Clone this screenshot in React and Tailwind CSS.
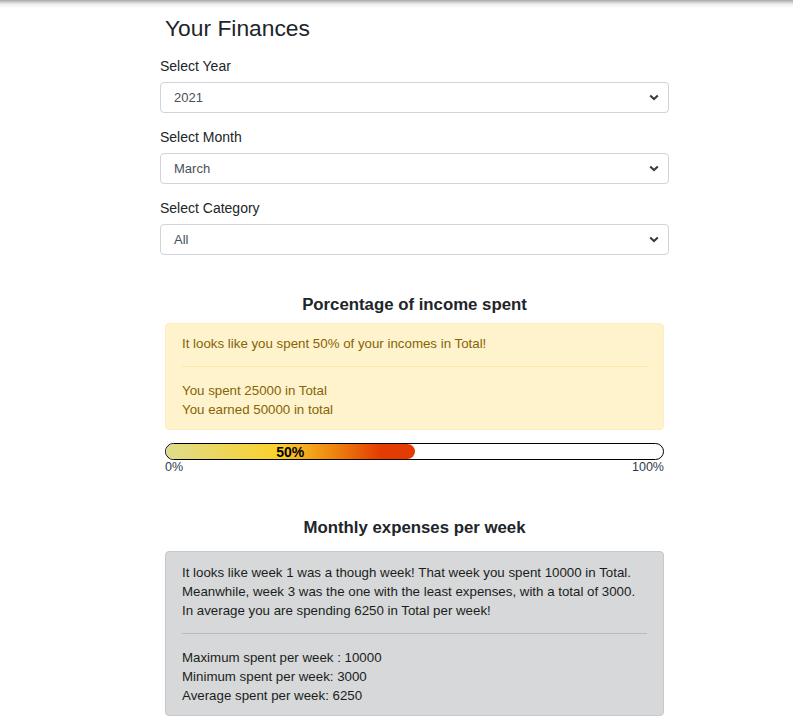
import React from 'react';

const fieldsets = [
  { label: 'Select Year', value: '2021' },
  { label: 'Select Month', value: 'March' },
  { label: 'Select Category', value: 'All' },
];

const Chevron = () => (
  <svg width="10" height="7" viewBox="0 0 10 7" className="mr-[9px]">
    <path d="M1.2 1.5l3.8 3.6 3.8-3.6" fill="none" stroke="#3a3a3a" strokeWidth="2" />
  </svg>
);

const SelectBox = ({ value }) => (
  <div className="h-[31px] border border-[#ced4da] rounded-[4px] bg-white flex items-center justify-between">
    <span className="pl-[13px] text-[13px] text-[#495057]">{value}</span>
    <Chevron />
  </div>
);

const App = () => {
  const percent = 50;

  return (
    <div className="min-h-[725px] bg-white text-[#212529] font-['Liberation_Sans',Arial,sans-serif]">
      <div className="h-[8px] bg-linear-to-b from-[#a9a9a9] via-[#ececec] to-white"></div>

      <div className="ml-[160px] w-[509px]">
        <h1 className="mt-[6px] pl-[5px] text-[22.8px] leading-[29px] font-normal">Your Finances</h1>

        {fieldsets.map((f, i) => (
          <div key={f.label} className={i === 0 ? 'mt-[13px]' : 'mt-[14px]'}>
            <label className="block text-[14px] leading-[21px] mb-[5px]">{f.label}</label>
            <SelectBox value={f.value} />
          </div>
        ))}

        <div className="px-[5px]">
          <h2 className="mt-[40px] text-center text-[16.8px] leading-[20px] font-bold">Porcentage of income spent</h2>
          <div className="mt-[8px] bg-[#fff3cd] border border-[#ffeeba] rounded-[4px] text-[#856404] text-[13.3px] leading-[19px] px-[16px] pt-[10px] pb-[10px]">
            <p>It looks like you spent {percent}% of your incomes in Total!</p>
            <hr className="mt-[12.5px] mb-[14.5px] border-0 border-t border-[#ffe8a1]" />
            <p>You spent 25000 in Total</p>
            <p>You earned 50000 in total</p>
          </div>

          <div className="mt-[13px] h-[17px] border border-black rounded-full bg-white overflow-hidden">
            <div
              className="h-full rounded-full flex items-center justify-center bg-[linear-gradient(to_right,#dfdc8c_0%,#f9d12b_45%,#ee820e_68%,#e43c00_86%,#e33a00_100%)]"
              style={{ width: `${percent}%` }}
            >
              <span className="text-[14px] leading-none font-bold text-black">{percent}%</span>
            </div>
          </div>
          <div className="flex justify-between text-[12.5px] leading-[15px] text-[#2f3b4c]">
            <span>0%</span>
            <span>100%</span>
          </div>

          <h2 className="mt-[43px] text-center text-[16.8px] leading-[20px] font-bold">Monthly expenses per week</h2>
          <div className="mt-[13px] bg-[#d6d8d9] border border-[#c6c8ca] rounded-[4px] text-[#1b1e21] text-[13.3px] leading-[19px] px-[16px] pt-[11px] pb-[10px]">
            <p className="whitespace-nowrap">
              <span className="block">It looks like week 1 was a though week! That week you spent 10000 in Total.</span>
              <span className="block">Meanwhile, week 3 was the one with the least expenses, with a total of 3000.</span>
              <span className="block">In average you are spending 6250 in Total per week!</span>
            </p>
            <hr className="mt-[12.5px] mb-[14.5px] border-0 border-t border-[#b9bbbe]" />
            <p>Maximum spent per week : 10000</p>
            <p>Minimum spent per week: 3000</p>
            <p>Average spent per week: 6250</p>
          </div>
        </div>
      </div>
    </div>
  );
};

export default App;
